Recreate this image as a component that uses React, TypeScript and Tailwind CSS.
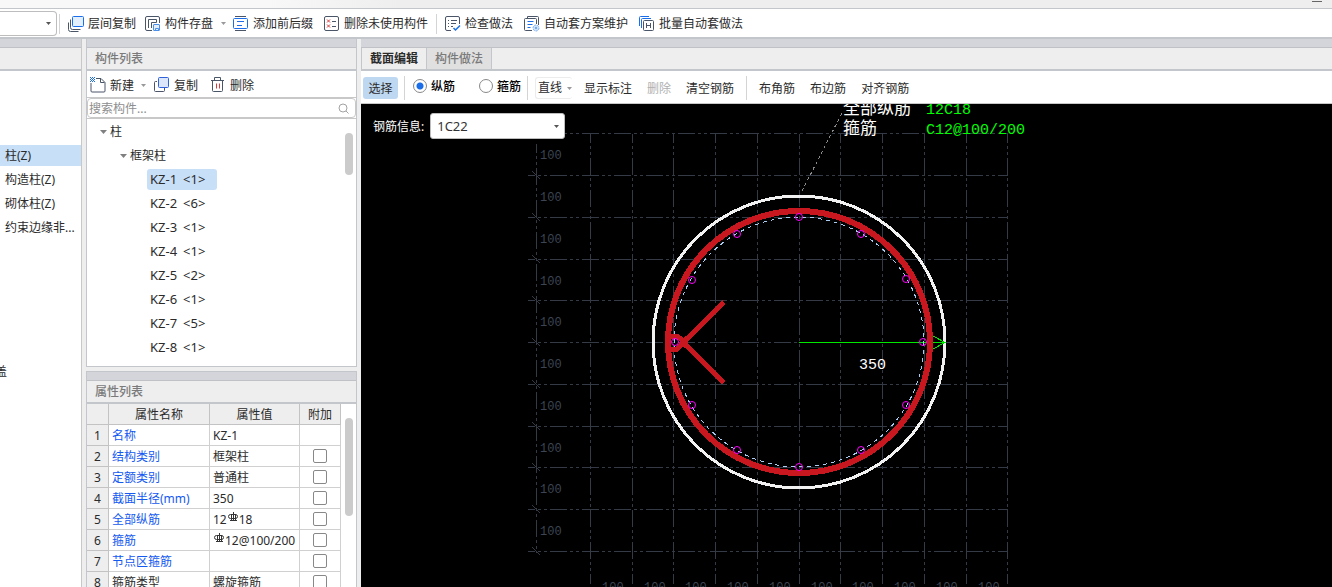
import { useState } from "react";
import type { ReactNode } from "react";

type PropertyRow = {
  name: string;
  value: ReactNode;
  checkable: boolean;
  required: boolean;
};

const DARK = "#4a5568";
const BLUE = "#1a6fe8";

function classNames(...values: Array<string | false | undefined>) {
  return values.filter(Boolean).join(" ");
}

function Icon({ children }: { children: ReactNode }) {
  return (
    <svg className="h-4 w-4 shrink-0" viewBox="0 0 16 16" fill="none" stroke={DARK} aria-hidden="true">
      {children}
    </svg>
  );
}

function LayerCopyIcon() {
  return (
    <Icon>
      <path d="M.5 6.5v7a2 2 0 0 0 2 2h8" />
      <path d="M2.5 3.5v8a2 2 0 0 0 2 2h8" />
      <rect x="4.5" y=".5" width="11" height="10" rx="1" fill="#e3effd" stroke={BLUE} />
    </Icon>
  );
}

function SaveComponentIcon() {
  return (
    <Icon>
      <path d="M7 14.5H2a1.5 1.5 0 0 1-1.5-1.5V2A1.5 1.5 0 0 1 2 .5h11A1.5 1.5 0 0 1 14.5 2v5" />
      <path d="M3.5 12V3.5h8v3h-5V12" />
      <rect x="8.5" y="8.5" width="6" height="6" rx=".5" fill="#e3effd" stroke="#4a90e8" />
      <path d="M10.5 14.5v-2h3v2" stroke="#4a90e8" />
    </Icon>
  );
}

function AffixIcon() {
  return (
    <Icon>
      <path d="M2 .5h11M2 14.5h11" />
      <rect x=".5" y="2.5" width="14" height="10" rx="1" stroke={BLUE} />
      <path d="M4 5.5h7M4 9.5h5" stroke={BLUE} />
    </Icon>
  );
}

function RemoveUnusedIcon() {
  return (
    <Icon>
      <rect x=".5" y=".5" width="14" height="14" rx="1.5" />
      <path d="M3 3.5l3 3m0-3l-3 3M3 8.5l3 3m0-3l-3 3" stroke="#d93a3a" />
      <path d="M8 5.5h4M8 10.5h4" />
    </Icon>
  );
}

function CheckMethodIcon() {
  return (
    <Icon>
      <path d="M6 14.5H2A1.5 1.5 0 0 1 .5 13V2A1.5 1.5 0 0 1 2 .5h11A1.5 1.5 0 0 1 14.5 2v6" />
      <path d="M3 4.5h1M6 4.5h6M3 7.5h1M6 7.5h5M3 10.5h1M6 10.5h2" />
      <path d="M8.5 12l2 2 4.5-4.5" stroke={BLUE} strokeWidth="1.5" />
    </Icon>
  );
}

function SchemeIcon() {
  return (
    <Icon>
      <path d="M3.5 2V.5h10a1 1 0 0 1 1 1V9" />
      <path d="M8 14.5H1.5a1 1 0 0 1-1-1v-10a1 1 0 0 1 1-1h10a1 1 0 0 1 1 1V8" />
      <path d="M3.5 5.5h6M3.5 8.5h5M3.5 11.5h3" stroke={BLUE} />
      <circle cx="12" cy="12" r="3" fill="#cfe2fb" stroke="#7fb0f0" strokeDasharray="2 1" />
      <circle cx="12" cy="12" r="1" fill="#5a98ea" stroke="none" />
    </Icon>
  );
}

function BatchIcon() {
  return (
    <Icon>
      <path d="M.5 10V1.5a1 1 0 0 1 1-1H10" stroke={BLUE} />
      <path d="M2.5 12V3.5a1 1 0 0 1 1-1H12" stroke={BLUE} />
      <rect x="4.5" y="4.5" width="10" height="10" rx="1" />
      <path d="M7.5 7v5M11.5 7v5M7.5 9.5h4" />
    </Icon>
  );
}

function NewIcon() {
  return (
    <Icon>
      <path d="M6 1.500h5l4 4V14a1 1 0 0 1-1 1H2a1 1 0 0 1-1-1V6" />
      <path d="M10.5 1.5v4h4" />
      <path d="M0 .5h5M0 2.5h5M0 4.5h5" stroke={BLUE} strokeDasharray="1 1" />
      <path d="M1 1.5h4M1 3.5h4" stroke={BLUE} strokeDasharray="1 1" />
    </Icon>
  );
}

function CopyIcon() {
  return (
    <Icon>
      <path d="M3 4.5H1.5a1 1 0 0 0-1 1v8a1 1 0 0 0 1 1h8a1 1 0 0 0 1-1V11" />
      <rect x="4.5" y=".5" width="10" height="10" rx="1" fill="#dbe6fb" stroke="#2f62d9" />
    </Icon>
  );
}

function TrashIcon() {
  return (
    <Icon>
      <path d="M1 3.5h13M4.5 3V.5h6V3M2.5 4v9.500a1 1 0 0 0 1 1h8a1 1 0 0 0 1-1V4" />
      <path d="M6.5 6.5v5M9.5 6.5v5" stroke="#d93a3a" />
    </Icon>
  );
}

function Caret({ className }: { className?: string }) {
  return (
    <svg className={classNames("shrink-0", className)} width="5" height="3" viewBox="0 0 5 3" aria-hidden="true">
      <path d="M0 0h5L2.5 3z" fill="currentColor" />
    </svg>
  );
}

function Divider({ className }: { className?: string }) {
  return <span className={classNames("w-px shrink-0 bg-[#d4d4d4]", className)} />;
}

function ToolButton({ icon, label, className }: { icon: ReactNode; label: string; className?: string }) {
  return (
    <button className={classNames("flex shrink-0 items-center gap-1 whitespace-nowrap", className)}>
      {icon}
      <span className="pt-px">{label}</span>
    </button>
  );
}

function TopToolbar() {
  return (
    <div className="flex h-[28px] shrink-0 items-center bg-white pt-px">
      <div className="relative h-[25px] w-[57px] shrink-0">
        <select
          aria-label="楼层"
          className="h-full w-full appearance-none rounded-r border border-l-0 border-[#bdbdbd] bg-white"
        />
        <Caret className="pointer-events-none absolute top-[11px] right-[6px] text-[#555]" />
      </div>
      <Divider className="ml-[2px] h-5" />
      <ToolButton className="ml-2" icon={<LayerCopyIcon />} label="层间复制" />
      <ToolButton className="ml-[9px]" icon={<SaveComponentIcon />} label="构件存盘" />
      <Caret className="mr-[7px] ml-2 text-[#999]" />
      <ToolButton icon={<AffixIcon />} label="添加前后缀" />
      <ToolButton className="ml-[11px]" icon={<RemoveUnusedIcon />} label="删除未使用构件" />
      <Divider className="ml-2 h-5" />
      <ToolButton className="ml-2" icon={<CheckMethodIcon />} label="检查做法" />
      <ToolButton className="ml-[11px]" icon={<SchemeIcon />} label="自动套方案维护" />
      <ToolButton className="ml-[11px]" icon={<BatchIcon />} label="批量自动套做法" />
    </div>
  );
}

function DockStrip() {
  return <div className="h-[9px] shrink-0 border-b border-[#bfc1c6] bg-[#d3d5da]" />;
}

function PanelTitle({ children }: { children?: ReactNode }) {
  return (
    <div className="flex h-[23px] shrink-0 items-center border-b-2 border-[#c3c6ca] bg-[#eee] pt-px pl-2 font-medium text-[#7a7a7a]">
      {children}
    </div>
  );
}

const categories = ["", "", "", "柱(Z)", "构造柱(Z)", "砌体柱(Z)", "约束边缘非...", "", "", "", "", ""];

function CategoryPanel() {
  return (
    <aside className="flex w-[82px] shrink-0 flex-col border-r border-[#c8c8c8] bg-white">
      <DockStrip />
      <PanelTitle />
      <ul>
        {categories.map((category, index) => (
          <li key={index} className="flex h-6 items-center">
            <span
              className={classNames(
                "flex h-[21px] w-full items-center pt-[2px] pl-[5px] whitespace-nowrap",
                category === "柱(Z)" && "bg-[#c8dff8]"
              )}
            >
              {category}
            </span>
          </li>
        ))}
        <li className="flex h-6 w-[7px] items-center justify-end overflow-hidden pt-[2px] whitespace-nowrap">盖</li>
      </ul>
    </aside>
  );
}

const components = [
  { name: "KZ-1", count: 1 },
  { name: "KZ-2", count: 6 },
  { name: "KZ-3", count: 1 },
  { name: "KZ-4", count: 1 },
  { name: "KZ-5", count: 2 },
  { name: "KZ-6", count: 1 },
  { name: "KZ-7", count: 5 },
  { name: "KZ-8", count: 1 }
];

function TreeArrow() {
  return (
    <svg width="7" height="4" viewBox="0 0 7 4" className="shrink-0" aria-hidden="true">
      <path d="M0 0h7L3.5 4z" fill="#808080" />
    </svg>
  );
}

function ComponentPanel() {
  const [selected, setSelected] = useState("KZ-1");

  return (
    <section className="flex h-[328px] shrink-0 flex-col border border-t-0 border-[#c3c6ca] bg-white">
      <DockStrip />
      <PanelTitle>构件列表</PanelTitle>
      <div className="flex h-[27px] shrink-0 items-center border-b border-[#c8c8c8] pt-[2px] pl-1">
        <ToolButton icon={<NewIcon />} label="新建" className="-ml-px" />
        <Caret className="mx-[7px] text-[#999]" />
        <ToolButton icon={<CopyIcon />} label="复制" className="ml-px" />
        <ToolButton icon={<TrashIcon />} label="删除" className="ml-3" />
      </div>
      <div className="flex h-5 shrink-0 items-center rounded border border-[#c8c8c8] px-px">
        <input
          aria-label="搜索构件"
          className="min-w-0 flex-1 bg-transparent pt-px outline-none placeholder:text-[#8e8e8e]"
          placeholder="搜索构件..."
        />
        <svg width="11" height="11" viewBox="0 0 11 11" fill="none" stroke="#a3a3a3" className="mr-[5px]" aria-hidden="true">
          <circle cx="5" cy="5" r="4" />
          <path d="M8 8l2.5 2.5" />
        </svg>
      </div>
      <div className="flex min-h-0 flex-1 border-t border-[#c8c8c8]">
        <ul className="flex-1">
          <li className="flex h-6 items-center gap-[3px] pt-[2px] pl-[13px]">
            <TreeArrow />柱
          </li>
          <li className="flex h-6 items-center gap-[3px] pt-[2px] pl-[33px]">
            <TreeArrow />
            框架柱
          </li>
          {components.map(({ name, count }) => (
            <li key={name} className="flex h-6 items-center pl-[60px]">
              <button
                className={classNames(
                  "flex h-[21px] w-[70px] items-center gap-[6px] rounded-[3px] pl-[3px] text-[13px] whitespace-nowrap",
                  selected === name && "bg-[#c8dff8]"
                )}
                onClick={() => setSelected(name)}
              >
                <span>{name}</span>
                <span>{`<${count}>`}</span>
              </button>
            </li>
          ))}
        </ul>
        <div className="mt-[14px] mr-[3px] h-[42px] w-2 rounded-full bg-[#cbcbcb]" />
      </div>
    </section>
  );
}

function RebarMark() {
  return (
    <svg
      className="mx-px mt-px inline h-[10px] w-[10px] align-top"
      viewBox="0 0 10 10"
      fill="none"
      stroke="#333"
      role="img"
      aria-label="C"
    >
      <rect x=".5" y="2.5" width="9" height="4" rx="2" />
      <path d="M3.5 2v6M5.500 0v9M7.5 2v6M2 8.5h7" />
    </svg>
  );
}

const properties: PropertyRow[] = [
  { name: "名称", value: "KZ-1", checkable: false, required: true },
  { name: "结构类别", value: "框架柱", checkable: true, required: true },
  { name: "定额类别", value: "普通柱", checkable: true, required: true },
  { name: "截面半径(mm)", value: "350", checkable: true, required: true },
  { name: "全部纵筋", value: <>12<RebarMark />18</>, checkable: true, required: true },
  { name: "箍筋", value: <><RebarMark />12@100/200</>, checkable: true, required: true },
  { name: "节点区箍筋", value: "", checkable: true, required: true },
  { name: "箍筋类型", value: "螺旋箍筋", checkable: true, required: false }
];

function PropertyPanel() {
  return (
    <section className="mt-1 flex min-h-0 flex-1 flex-col overflow-hidden border border-b-0 border-[#c3c6ca] bg-white">
      <DockStrip />
      <PanelTitle>属性列表</PanelTitle>
      <div className="flex">
        <table className="w-[254px] table-fixed border-separate border-spacing-0">
          <colgroup>
            <col className="w-[22px]" />
            <col className="w-[101px]" />
            <col className="w-[90px]" />
            <col className="w-[41px]" />
          </colgroup>
          <thead>
            <tr className="h-[21px] bg-[#eee]">
              {["", "属性名称", "属性值", "附加"].map((title) => (
                <th key={title} className="border-r border-b border-[#c3c3c3] p-0 pt-[2px] font-normal">
                  {title}
                </th>
              ))}
            </tr>
          </thead>
          <tbody>
            {properties.map((row, index) => (
              <tr key={row.name} className="h-[21px]">
                <td className="border-r border-b border-[#c3c3c3] bg-[#eee] p-0 pt-[2px] text-center">{index + 1}</td>
                <td
                  className={classNames(
                    "border-r border-b border-[#d0d0d0] p-0 pt-[2px] pl-[3px] whitespace-nowrap",
                    row.required && "text-[#1459f0]"
                  )}
                >
                  {row.name}
                </td>
                <td className="border-r border-b border-[#d0d0d0] p-0 pt-[2px] pl-[3px] whitespace-nowrap">
                  {row.value}
                </td>
                <td className="border-r border-b border-[#d0d0d0] p-0">
                  {row.checkable ? (
                    <input
                      type="checkbox"
                      aria-label={`附加 ${row.name}`}
                      className="mx-auto block h-[14px] w-[14px] appearance-none rounded-[2px] border border-[#888] bg-white checked:bg-[#1a6fe8]"
                    />
                  ) : null}
                </td>
              </tr>
            ))}
          </tbody>
        </table>
        <div className="mt-[14px] ml-1 h-[98px] w-2 rounded-full bg-[#cbcbcb]" />
      </div>
    </section>
  );
}

function BarTypeRadio({ label, checked, onSelect }: { label: string; checked: boolean; onSelect: () => void }) {
  return (
    <label className="flex shrink-0 items-center gap-1 font-medium text-black">
      <input
        type="radio"
        name="bar-type"
        checked={checked}
        onChange={onSelect}
        className="h-[14px] w-[14px] appearance-none rounded-full border border-[#888] bg-white checked:bg-[radial-gradient(circle,#1a6fe8_0_3px,white_4px)]"
      />
      <span className="pt-px">{label}</span>
    </label>
  );
}

function SectionToolbar() {
  const [barType, setBarType] = useState("纵筋");

  return (
    <div className="flex h-[33px] shrink-0 items-center border-b border-[#c8c8c8] bg-white pt-[2px] whitespace-nowrap">
      <button className="ml-[2px] h-[22px] w-[35px] shrink-0 rounded-[3px] bg-[#bfd8f2] pt-px">选择</button>
      <Divider className="mr-2 ml-[6px] h-6" />
      <div className="flex gap-6 pb-1">
        {["纵筋", "箍筋"].map((type) => (
          <BarTypeRadio key={type} label={type} checked={barType === type} onSelect={() => setBarType(type)} />
        ))}
      </div>
      <Divider className="ml-[6px] h-6" />
      <button className="ml-[7px] flex h-[22px] shrink-0 items-center gap-[5px] rounded-[3px] border border-r-0 border-[#ececec] pl-[2px]">
        直线
        <Caret className="text-[#999]" />
      </button>
      <div className="ml-3 flex gap-[15px] pt-[2px]">
        <button>显示标注</button>
        <button disabled className="text-[#b0b0b0]">
          删除
        </button>
        <button>清空钢筋</button>
      </div>
      <Divider className="mr-3 ml-3 h-6" />
      <div className="flex gap-[15px] pt-[2px]">
        <button>布角筋</button>
        <button>布边筋</button>
        <button>对齐钢筋</button>
      </div>
    </div>
  );
}

// Section drawing geometry, in canvas pixels. One grid cell is 100 mm.
const columns = [229, 271, 312, 354, 396, 438, 479, 521, 563, 605, 646];
const rows = [29, 71, 113, 155, 196, 238, 280, 322, 363, 405, 447];
const center = { x: 438, y: 238 };
const barRadius = 125;
const bars = Array.from({ length: 12 }, (_, index) => {
  const angle = (index * Math.PI) / 6;
  return {
    x: Math.round(center.x + (barRadius - 1) * Math.cos(angle)),
    y: Math.round(center.y + barRadius * Math.sin(angle))
  };
});

function SectionDrawing() {
  return (
    <svg className="block h-full w-full" fill="none" shapeRendering="crispEdges" role="img" aria-label="柱截面">
      <g stroke="#343b47">
        {rows.map((y, index) => (
          <g key={y}>
            <path
              d={`M${index === 0 ? 199 : 167} ${y + 0.5}H647`}
              strokeDasharray="17 3 3 3 3 3"
              strokeDashoffset="10"
            />
            {index > 0 ? <path d={`M171 ${y - 4}l8 8`} /> : null}
          </g>
        ))}
        {columns.map((x) => (
          <path key={x} d={`M${x + 0.5} 30V480`} strokeDasharray="17 3 3 3 3 3" strokeDashoffset="8" />
        ))}
        <path d="M175.5 40V449" strokeDasharray="17 3 3 3 3 3" strokeDashoffset="8" />
      </g>
      <g className="fill-[#3d4553] font-['Liberation_Mono',monospace] text-[12px]">
        {rows.slice(0, -1).map((y) => (
          <text key={y} x="179" y={y + 26}>
            100
          </text>
        ))}
        {columns.slice(0, -1).map((x) => (
          <text key={x} x={x + 12} y="487">
            100
          </text>
        ))}
      </g>

      <circle cx={center.x} cy={center.y} r="146" stroke="#f2f2f2" strokeWidth="3" />
      <path d="M438 238.5H584" stroke="#00e800" />
      <circle cx={center.x} cy={center.y} r="131" stroke="#c8171e" strokeWidth="6" />
      <circle cx={center.x} cy={center.y} r={barRadius} stroke="#a9cdf2" strokeDasharray="4 4" />
      <path d="M363 198L322 238.5L363 279" stroke="#c8171e" strokeWidth="5" />
      <path d="M308 232h8l8 6-8 7h-8" stroke="#c8171e" strokeWidth="5" />
      <path d="M572 232l12 6.5-12 6.500" stroke="#00e800" />
      <g stroke="#f0f">
        {bars.map((bar) => (
          <circle key={`${bar.x}-${bar.y}`} cx={bar.x} cy={bar.y} r="3.5" shapeRendering="auto" />
        ))}
      </g>
      <path d="M441 87L482 7" stroke="#8a8a8a" strokeDasharray="3 3" />

      <g className="fill-white font-['Liberation_Mono','Noto_Sans_CJK_SC',monospace] text-[17px]">
        <text x="482" y="10">
          全部纵筋
        </text>
        <text x="482" y="30">
          箍筋
        </text>
      </g>
      <g className="font-['Liberation_Mono',monospace] text-[15px]">
        <g className="fill-[#00ff00]">
          <text x="565" y="10">
            12C18
          </text>
          <text x="565" y="30">
            C12@100/200
          </text>
        </g>
        <text x="498" y="265" className="fill-white">
          350
        </text>
      </g>
    </svg>
  );
}

function SectionEditor() {
  return (
    <main className="flex min-w-0 flex-1 flex-col">
      <DockStrip />
      <div className="flex h-[23px] shrink-0 border-b-2 border-l border-[#c3c6ca] bg-[#eee]">
        <button className="w-[65px] border-r border-[#c3c6ca] pt-px font-bold">截面编辑</button>
        <button className="w-[65px] border-r border-[#c3c6ca] bg-[#e0e0e0] pt-px font-medium text-[#7a7a7a]">
          构件做法
        </button>
      </div>
      <SectionToolbar />
      <div className="relative min-h-0 flex-1 overflow-hidden bg-black">
        <SectionDrawing />
        <label className="absolute top-[9px] left-3 flex items-center gap-[6px] text-white">
          <span className="pt-[2px]">钢筋信息:</span>
          <select className="h-[26px] w-[135px] appearance-none rounded-[3px] border border-[#bdbdbd] bg-white pl-[6px] text-[13px] text-[#333]">
            <option>1C22</option>
          </select>
          <Caret className="pointer-events-none absolute top-3 right-[6px] text-[#555]" />
        </label>
      </div>
    </main>
  );
}

export default function App() {
  return (
    <div className="flex h-screen flex-col overflow-hidden bg-[#eee] font-['Noto_Sans','Noto_Sans_CJK_SC',sans-serif] text-[12px] leading-[18px] text-[#2b2b2b]">
      <header className="flex h-[9px] shrink-0 items-start justify-end border-b border-[#c3c6ca] bg-linear-to-r from-[#f8f8f8] from-20% to-[#eee] to-30%">
        <button aria-label="最小化" className="mt-px mr-[10px] h-px w-[10px] bg-[#666]" />
      </header>
      <TopToolbar />
      <div className="flex min-h-0 flex-1 gap-1 border-t-2 border-[#c3c6ca]">
        <CategoryPanel />
        <div className="flex w-[271px] shrink-0 flex-col">
          <ComponentPanel />
          <PropertyPanel />
        </div>
        <SectionEditor />
      </div>
    </div>
  );
}
